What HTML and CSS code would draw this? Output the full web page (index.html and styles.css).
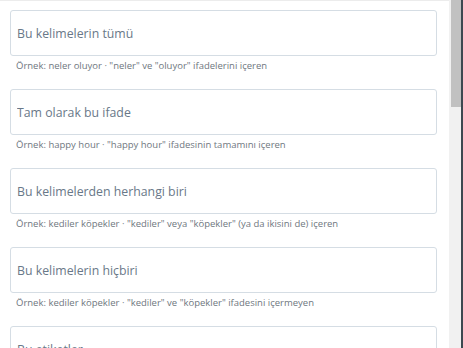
FILE: index.html
```html
<!DOCTYPE html>
<html lang="tr">
<head>
  <meta charset="UTF-8" />
  <meta name="viewport" content="width=device-width, initial-scale=1.0" />
  <title>Gelişmiş arama</title>
  <link rel="stylesheet" href="styles.css">
</head>
<body>
  <div class="frame">
    <div class="panel">
      <div class="field">
        <input type="text" class="search-input" placeholder="Bu kelimelerin tümü">
        <p class="hint">Örnek: neler oluyor · "neler" ve "oluyor" ifadelerini içeren</p>
      </div>
      <div class="field">
        <input type="text" class="search-input" placeholder="Tam olarak bu ifade">
        <p class="hint">Örnek: happy hour · "happy hour" ifadesinin tamamını içeren</p>
      </div>
      <div class="field">
        <input type="text" class="search-input" placeholder="Bu kelimelerden herhangi biri">
        <p class="hint">Örnek: kediler köpekler · "kediler" veya "köpekler" (ya da ikisini de) içeren</p>
      </div>
      <div class="field">
        <input type="text" class="search-input" placeholder="Bu kelimelerin hiçbiri">
        <p class="hint">Örnek: kediler köpekler · "kediler" ve "köpekler" ifadesini içermeyen</p>
      </div>
      <div class="field">
        <input type="text" class="search-input" placeholder="Bu etiketler">
        <p class="hint">Örnek: #ThrowbackThursday · #ThrowbackThursday etiketini içeren</p>
      </div>
    </div>
    <!-- fake scrollbar, headless browser hides the real one -->
    <div class="scrollbar">
      <div class="thumb"></div>
    </div>
  </div>
</body>
</html>
```

FILE: styles.css
```css
html, body {
  margin: 0;
  height: 100%;
  overflow: hidden;
}
body {
  background-color: #3d4850;
  font-family: 'Open Sans', 'Noto Sans', sans-serif;
}
.frame {
  display: flex;
  width: 461px;
  height: 348px;
  background: #fff;
}
.panel {
  box-sizing: border-box;
  flex: 1;
  height: 100%;
  overflow: hidden;
  border-top: 1px solid #ececec;
  padding: 9px 12px 0 10px;
}
.scrollbar {
  width: 12px;
  background: #f1f1f1;
}
.thumb {
  margin-left: 2px;
  height: 107px;
  background: #c1c1c1;
}
.field {
  margin-bottom: 16px;
}
.search-input {
  box-sizing: border-box;
  display: block;
  width: 100%;
  height: 46px;
  padding: 0 6px;
  border: 1px solid #d5dde4;
  border-radius: 3px;
  font-family: inherit;
  font-size: 12.3px;
  color: #333;
  outline: none;
}
.search-input::placeholder {
  color: #697888;
}
.hint {
  margin: 3px 0 0 6px;
  font-size: 9.5px;
  line-height: 14px;
  color: #6f7780;
}
```
